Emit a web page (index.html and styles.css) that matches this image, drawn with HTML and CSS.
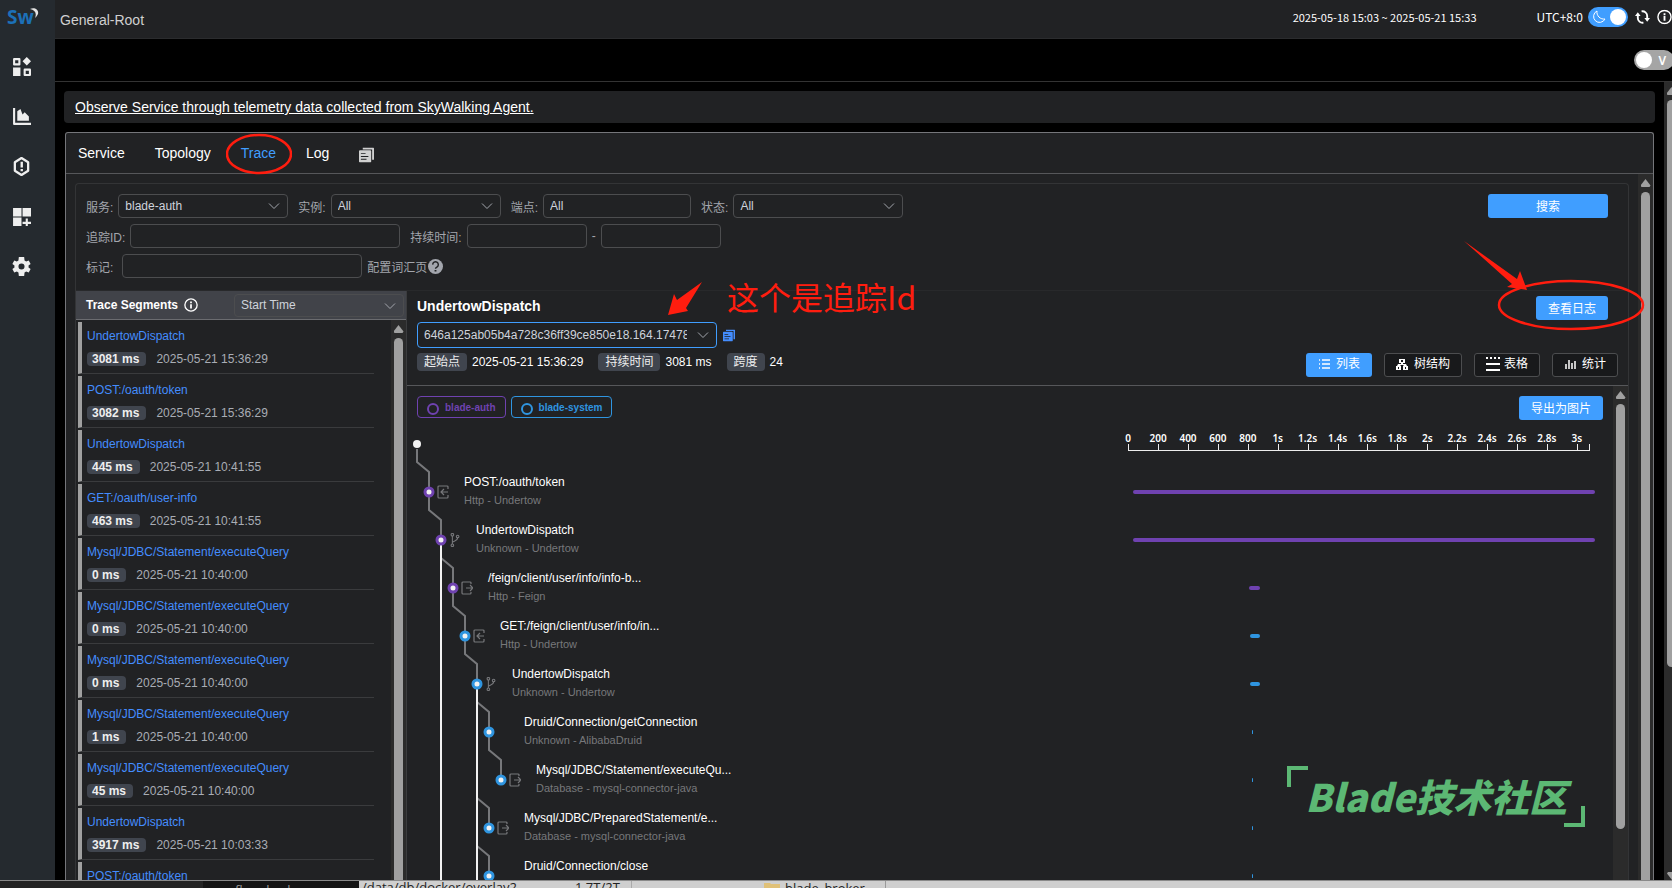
FILE: index.html
```html
<!DOCTYPE html>
<html lang="zh-CN">
<head>
  <meta charset="UTF-8">
  <title>SkyWalking - General-Root</title>
  <link rel="stylesheet" href="styles.css">
</head>
<body>
  <!-- icons -->
  <svg class="sprite" aria-hidden="true">
    <symbol id="i-chevron" viewBox="0 0 12 12"><path d="M1 3.500L6 8.500l5-5" fill="none" stroke="currentColor"/></symbol>
    <symbol id="i-copy" viewBox="0 0 16 16">
      <path d="M4 0h11a1 1 0 0 1 1 1v12h-2V2H4z" fill="currentColor"/>
      <path fill-rule="evenodd" d="M1 3h11a1 1 0 0 1 1 1v11a1 1 0 0 1-1 1H1a1 1 0 0 1-1-1V4a1 1 0 0 1 1-1zm1 3v1h5V6zm0 3v1h8V9zm0 3v1h6v-1z" fill="currentColor"/>
    </symbol>
    <symbol id="i-info" viewBox="0 0 16 16">
      <circle cx="8" cy="8" r="7" fill="none" stroke="currentColor" stroke-width="1.500"/>
      <path d="M7 4h2v2H7zM7 7h2v5H7z" fill="currentColor"/>
    </symbol>
    <symbol id="i-in" viewBox="0 0 12 14">
      <path d="M11 4V2a1 1 0 0 0-1-1H2a1 1 0 0 0-1 1v10a1 1 0 0 0 1 1h8a1 1 0 0 0 1-1v-2M11 7H4M7 4L4 7l3 3" fill="none" stroke="currentColor" stroke-width="1.200"/>
    </symbol>
    <symbol id="i-out" viewBox="0 0 12 14">
      <path d="M10 3V2a1 1 0 0 0-1-1H2a1 1 0 0 0-1 1v10a1 1 0 0 0 1 1h7a1 1 0 0 0 1-1v-1M5 7h6M9 4l3 3-3 3" fill="none" stroke="currentColor" stroke-width="1.200"/>
    </symbol>
    <symbol id="i-fork" viewBox="0 0 12 16">
      <g fill="none" stroke="currentColor" stroke-width="1.200"><circle cx="3" cy="2" r="1.500"/><circle cx="3" cy="14" r="1.500"/><circle cx="9" cy="4" r="1.500"/><path d="M3 3.500v9M9 5.500C9 9 5 9 3 10.500"/></g>
    </symbol>
  </svg>

  <div class="app">
    <nav class="sidebar">
      <a class="logo" href="#">Sw<svg viewBox="0 0 10 11"><path d="M1 1c5-2 9 1 8 5-1 2-2 3-3 4C8 5 6 2 1 1z" fill="#e4e4e4"/></svg></a>
      <a class="nav-item" href="#" aria-label="Dashboards"><svg viewBox="0 0 18 18"><path d="M2 2h5v5H2zM12 12h5v5h-5z" fill="none" stroke="#eee" stroke-width="2" stroke-linejoin="round"/><path d="M1 10h7v8H1zM14 0l4 4-4 4-4-4z" fill="#eee"/></svg></a>
      <a class="nav-item" href="#" aria-label="Metrics"><svg viewBox="0 0 18 18" fill="#eee"><path d="M1 1h2v14h15v2H2a1 1 0 0 1-1-1zM5 13V4l3-2 2 5 2-2 4 4v4z"/></svg></a>
      <a class="nav-item" href="#" aria-label="Alarms"><svg viewBox="0 0 18 20"><path d="M9 1l7 4.500v9L9 19l-7-4.500v-9z" fill="none" stroke="#eee" stroke-width="2.400" stroke-linejoin="round"/><path d="M8 5h2.500v6H8zM8 12.500h2.500V15H8z" fill="#eee"/></svg></a>
      <a class="nav-item" href="#" aria-label="Marketplace"><svg viewBox="0 0 18 18" fill="#eee"><path d="M1 1h8v8H1zM10 1h8v8h-8zM1 10h8v8H1zM13 11h2v3h3v2h-3v3h-2v-3h-3v-2h3z"/></svg></a>
      <a class="nav-item" href="#" aria-label="Settings"><svg viewBox="2 2 20 20" fill="#eee"><path d="M19.400 13a7.500 7.500 0 0 0 0-2l2.200-1.700-2-3.600-2.700 1.100a7 7 0 0 0-1.700-1L14.800 2H9.200l-.4 3.800a7 7 0 0 0-1.700 1L4.400 5.700l-2 3.600L4.600 11a7.500 7.500 0 0 0 0 2l-2.200 1.700 2 3.600 2.700-1.100a7 7 0 0 0 1.700 1l.4 3.800h5.600l.4-3.800a7 7 0 0 0 1.700-1l2.700 1.100 2-3.600zM12 15.200a3.200 3.200 0 1 1 0-6.400 3.200 3.200 0 0 1 0 6.400z"/></svg></a>
    </nav>

    <div class="page">
      <header class="header">
        <span class="path">General-Root</span>
        <span class="range">2025-05-18 15:03 ~ 2025-05-21 15:33</span>
        <span class="utc">UTC+8:0</span>
        <button class="switch dark" aria-label="Dark mode"><svg viewBox="0 0 14 14"><path d="M5 1a6 6 0 1 0 8 8A7 7 0 0 1 5 1z" fill="none" stroke="#fff"/></svg><i></i></button>
        <button class="plain" aria-label="Reload"><svg viewBox="0 0 16 16"><path d="M3 6v3a5 5 0 0 0 6 5M7 2a5 5 0 0 1 6 5v3" fill="none" stroke="#fff" stroke-width="2"/><path d="M0 7l3-4 3 4zM10 9l3 4 3-4z" fill="#fff"/></svg></button>
        <button class="plain" aria-label="About"><svg viewBox="0 0 16 16"><use href="#i-info"/></svg></button>
      </header>
      <div class="toolbar"><button class="switch view"><i></i>V</button></div>

      <div class="body">
        <main class="content">
          <div class="banner"><a href="#">Observe Service through telemetry data collected from SkyWalking Agent.</a></div>

          <section class="card">
            <div class="tabs">
              <a href="#">Service</a>
              <a href="#">Topology</a>
              <a href="#" class="active">Trace</a>
              <a href="#">Log</a>
              <button class="plain" aria-label="Copy"><svg viewBox="0 0 16 16"><use href="#i-copy"/></svg></button>
            </div>

            <div class="card-body">
              <div class="trace">
                <form class="filters">
                  <div class="filter-row">
                    <label for="service">服务:</label>
                    <span class="select"><select id="service"><option>blade-auth</option></select><svg><use href="#i-chevron"/></svg></span>
                    <label for="instance">实例:</label>
                    <span class="select"><select id="instance"><option>All</option></select><svg><use href="#i-chevron"/></svg></span>
                    <label for="endpoint">端点:</label>
                    <input id="endpoint" class="w-endpoint" value="All">
                    <label for="status">状态:</label>
                    <span class="select"><select id="status"><option>All</option></select><svg><use href="#i-chevron"/></svg></span>
                    <button type="button" class="btn search">搜索</button>
                  </div>
                  <div class="filter-row">
                    <label for="traceId">追踪ID:</label>
                    <input id="traceId" class="w-trace">
                    <label for="minTime">持续时间:</label>
                    <input id="minTime" class="w-time">
                    <span class="dash">-</span>
                    <input id="maxTime" class="w-time" aria-label="最大持续时间">
                  </div>
                  <div class="filter-row">
                    <label for="tags" class="tags-label">标记:</label>
                    <input id="tags" class="w-tags">
                    <a class="vocab" href="#">配置词汇页<svg viewBox="0 0 16 16"><circle cx="8" cy="8" r="8" fill="#a3a6ad"/><path d="M5 6a3 3 0 1 1 4.500 2.600C8.300 9.300 8 9.600 8 10.500M7 12.500h2" fill="none" stroke="#212224" stroke-width="1.500"/></svg></a>
                  </div>
                </form>

                <div class="split">
                  <aside class="segments">
                    <div class="segments-head">
                      <strong>Trace Segments</strong>
                      <svg viewBox="0 0 16 16"><use href="#i-info"/></svg>
                      <span class="select sort"><select aria-label="Sort"><option>Start Time</option></select><svg><use href="#i-chevron"/></svg></span>
                    </div>
                    <div class="segments-body">
                      <ul id="segments"></ul>
                      <div class="scroll"><b></b><i></i></div>
                    </div>
                  </aside>

                  <section class="detail">
                    <div class="detail-head">
                      <div class="title-row">
                        <h3>UndertowDispatch</h3>
                        <button class="btn">查看日志</button>
                      </div>
                      <div class="id-row">
                        <span class="select trace-id"><select aria-label="Trace ID"><option>646a125ab05b4a728c36ff39ce850e18.164.17478129</option></select><svg><use href="#i-chevron"/></svg></span>
                        <button class="plain" aria-label="Copy trace id"><svg viewBox="0 0 16 16"><use href="#i-copy"/></svg></button>
                      </div>
                      <div class="meta-row">
                        <span class="tag">起始点</span><span class="val">2025-05-21 15:36:29</span>
                        <span class="tag">持续时间</span><span class="val">3081 ms</span>
                        <span class="tag">跨度</span><span class="val">24</span>
                        <div class="views">
                          <button class="btn"><svg viewBox="0 0 12 12"><path d="M4 2h8M4 6h8M4 10h8M1 2h1M1 6h1M1 10h1" stroke="#fff" stroke-width="1.400"/></svg>列表</button>
                          <button class="btn ghost"><svg viewBox="0 0 12 12" fill="#fff"><path d="M3 1h6v4H7v1h3l1 2h1v4H7V8h1L7 7H5L4 8h1v4H0V8h1l1-2h3V5H3z"/><path d="M5 2h2v2H5zM2 9h1v2H2zM9 9h1v2H9z" fill="#18191b"/></svg>树结构</button>
                          <button class="btn ghost table"><svg viewBox="0 0 14 14"><path d="M0 1h2M4 1h2M8 1h2M12 1h2M0 7h14M0 13h14" stroke="#fff" stroke-width="2"/></svg>表格</button>
                          <button class="btn ghost"><svg viewBox="0 0 12 12"><path d="M2 6v5M5 2v9M8 5v6M11 3v8" stroke="#fff" stroke-width="1.500"/></svg>统计</button>
                        </div>
                      </div>
                    </div>

                    <div class="detail-body">
                      <div class="chart">
                        <div class="legend">
                          <button class="auth"><i></i>blade-auth</button>
                          <button class="system"><i></i>blade-system</button>
                          <button class="btn export">导出为图片</button>
                        </div>
                        <div class="plot">
                          <svg class="links" id="links"></svg>
                          <div class="axis" id="axis"></div>
                          <div class="spans" id="spans"></div>
                        </div>
                      </div>
                      <div class="scroll short"><b></b><i></i></div>
                    </div>
                  </section>
                </div>
              </div>
              <div class="scroll"><b></b><i></i></div>
            </div>
          </section>
        </main>
        <div class="page-scroll"><div class="scroll"><b></b><i></i><b class="down"></b></div></div>
      </div>
    </div>
  </div>

  <!-- window behind the browser -->
  <div class="behind">
    <span class="b-left"></span>
    <span class="b-mid">flow_broker</span>
    <span class="b-path">/data/db/docker/overlay2...</span>
    <span class="b-size">1.7T/2T</span>
    <span class="b-file"><svg viewBox="0 0 16 12"><path d="M0 1h6l1 1h9v10H0z" fill="#e0c178"/></svg>blade_broker</span>
  </div>

  <!-- annotations -->
  <svg class="mark mark-tab" viewBox="0 0 66 42"><ellipse cx="33" cy="21" rx="32" ry="19" fill="none" stroke="#ff1d0f" stroke-width="2.500"/></svg>
  <svg class="mark mark-log" viewBox="0 0 182 92"><ellipse cx="107" cy="64" rx="72" ry="24" fill="none" stroke="#ff1d0f" stroke-width="2.500"/><path d="M0 0L53 38 56 30 63 49 43 46 48 43z" fill="#ff1d0f"/></svg>
  <svg class="mark mark-id" viewBox="0 0 34 33"><path d="M34 0L18 26l2 3L0 33 6 12l3 6z" fill="#ff1d0f"/></svg>
  <div class="mark mark-text">这个是追踪Id</div>
  <div class="mark watermark">Blade技术社区</div>

  <script>
    const segments = [
      ['UndertowDispatch', 3081, '2025-05-21 15:36:29'],
      ['POST:/oauth/token', 3082, '2025-05-21 15:36:29'],
      ['UndertowDispatch', 445, '2025-05-21 10:41:55'],
      ['GET:/oauth/user-info', 463, '2025-05-21 10:41:55'],
      ['Mysql/JDBC/Statement/executeQuery', 0, '2025-05-21 10:40:00'],
      ['Mysql/JDBC/Statement/executeQuery', 0, '2025-05-21 10:40:00'],
      ['Mysql/JDBC/Statement/executeQuery', 0, '2025-05-21 10:40:00'],
      ['Mysql/JDBC/Statement/executeQuery', 1, '2025-05-21 10:40:00'],
      ['Mysql/JDBC/Statement/executeQuery', 45, '2025-05-21 10:40:00'],
      ['UndertowDispatch', 3917, '2025-05-21 10:03:33'],
      ['POST:/oauth/token', 3918, '2025-05-21 10:03:33']
    ];
    document.getElementById('segments').innerHTML = segments.map(s =>
      `<li><a href="#">${s[0]}</a><div><span class="ms">${s[1]} ms</span><time>${s[2]}</time></div></li>`
    ).join('');

    const total = 3081;
    const colors = { auth: '#6f42b0', system: '#2f95e0' };
    // name, layer - component, level, service, icon, start, duration
    const spans = [
      ['POST:/oauth/token', 'Http - Undertow', 1, 'auth', 'in', 0, 3081],
      ['UndertowDispatch', 'Unknown - Undertow', 2, 'auth', 'fork', 0, 3081],
      ['/feign/client/user/info/info-b...', 'Http - Feign', 3, 'auth', 'out', 778, 74],
      ['GET:/feign/client/user/info/in...', 'Http - Undertow', 4, 'system', 'in', 784, 62],
      ['UndertowDispatch', 'Unknown - Undertow', 5, 'system', 'fork', 784, 62],
      ['Druid/Connection/getConnection', 'Unknown - AlibabaDruid', 6, 'system', '', 794, 1],
      ['Mysql/JDBC/Statement/executeQu...', 'Database - mysql-connector-java', 7, 'system', 'out', 794, 1],
      ['Mysql/JDBC/PreparedStatement/e...', 'Database - mysql-connector-java', 6, 'system', 'out', 795, 1],
      ['Druid/Connection/close', 'Unknown - AlibabaDruid', 6, 'system', '', 798, 1]
    ];

    const rowHeight = 48;
    const x = level => 10 + level * 12;
    const y = i => 72 + i * rowHeight;

    document.getElementById('spans').innerHTML = spans.map(s => `
      <div class="span-row">
        <div class="span-name" style="padding-left:${x(s[2]) + 8}px">
          <svg class="kind">${s[4] ? `<use href="#i-${s[4]}"/>` : ''}</svg>
          <div><p>${s[0]}</p><small>${s[1]}</small></div>
        </div>
        <div class="span-time"><i class="${s[3]}" style="margin-left:${s[5] / total * 100}%;width:${s[6] / total * 100}%"></i></div>
      </div>`).join('');

    let g = '';
    spans.forEach((s, i) => {
      const cx = x(s[2]), cy = y(i);
      const direct = i === 0 || spans[i - 1][2] === s[2] - 1 && spans[i - 1][4] !== 'fork';
      const top = direct ? `M${cx - 12} ${cy - 43}V${cy - 30}` : `M${cx - 12} ${cy - 30}`;
      g += `<path d="${top}L${cx} ${cy - 20}V${cy - 5}" fill="none" stroke="#77787b" stroke-width="2"/>`;
    });
    spans.forEach((s, i) => {
      if (s[4] === 'fork') g += `<path d="M${x(s[2])} ${y(i) + 5}V600" stroke="#f2f2f2" stroke-width="2"/>`;
    });
    g += `<circle cx="${x(0)}" cy="24" r="4" fill="#f2f2f2"/>`;
    spans.forEach((s, i) => {
      g += `<circle cx="${x(s[2])}" cy="${y(i)}" r="4" fill="#f2f2f2" stroke="${colors[s[3]]}" stroke-width="3"/>`;
    });
    document.getElementById('links').innerHTML = g;

    let ticks = '';
    for (let t = 0; t <= total; t += 200) {
      const w = Math.min(200, total - t) / total * 100;
      ticks += `<span style="width:${w}%"><em>${t < 1000 ? t : t / 1000 + 's'}</em></span>`;
    }
    document.getElementById('axis').innerHTML = ticks;
  </script>
</body>
</html>
```
FILE: styles.css
```css
* {
  box-sizing: border-box;
}
body {
  margin: 0;
  height: 100vh;
  display: flex;
  flex-direction: column;
  overflow: hidden;
  background: #000;
  color: #fff;
  font-family: "Liberation Sans", "Noto Sans CJK SC", sans-serif;
  font-size: 12px;
}
a {
  color: inherit;
  text-decoration: none;
}
ul, h3, p {
  margin: 0;
  padding: 0;
  list-style: none;
}
button, input, select {
  font: inherit;
  color: inherit;
}
.sprite {
  position: absolute;
  width: 0;
  height: 0;
}
.app {
  flex: 1;
  min-height: 0;
  display: flex;
}
.plain {
  background: none;
  border: none;
  padding: 0;
  display: flex;
  flex: none;
}

/* sidebar */
.sidebar {
  width: 55px;
  flex: none;
  background: #252a2f;
}
.logo {
  display: flex;
  height: 41px;
  padding: 5px 0 0 7px;
  font: 700 19px/24px "Noto Sans", sans-serif;
  color: #1c70b8;
}
.logo svg {
  width: 10px;
  height: 11px;
  margin: 3px 0 0 -5px;
}
.nav-item {
  display: flex;
  align-items: center;
  height: 50px;
  padding-left: 12px;
}
.nav-item svg {
  width: 19px;
  height: 19px;
}

/* header */
.page {
  flex: 1;
  min-width: 0;
  display: flex;
  flex-direction: column;
}
.header {
  height: 39px;
  flex: none;
  display: flex;
  align-items: center;
  padding: 0 0 5px 5px;
  background: #212224;
  border-bottom: 1px solid #2b2c2e;
}
.path {
  flex: 1;
  padding-top: 6px;
  font-size: 14px;
  color: #d0d0d0;
}
.range, .utc {
  font-family: "Noto Sans CJK SC", sans-serif;
}
.range {
  margin-right: 60px;
  font-size: 11px;
}
.utc {
  margin-right: 5px;
}
.switch {
  width: 40px;
  height: 20px;
  flex: none;
  display: flex;
  align-items: center;
  justify-content: space-between;
  border: none;
  border-radius: 10px;
  padding: 0 2px 0 4px;
  background: #409eff;
}
.switch i {
  width: 16px;
  height: 16px;
  border-radius: 50%;
  background: #fff;
}
.switch svg {
  width: 14px;
  height: 14px;
}
.switch.view {
  margin-right: -2px;
  padding: 0 8px 0 2px;
  background: #a5a5a5;
  font: 600 12px "Noto Sans", sans-serif;
}
.header .plain {
  margin-left: 7px;
}
.header .plain svg {
  width: 15px;
  height: 16px;
}
.toolbar {
  height: 43px;
  flex: none;
  display: flex;
  justify-content: flex-end;
  align-items: center;
  border-bottom: 1px solid #333;
}

/* content */
.body {
  flex: 1;
  min-height: 0;
  display: flex;
}
.content {
  flex: 1;
  min-width: 0;
  display: flex;
  flex-direction: column;
  padding: 9px 9px 0;
}
.banner {
  flex: none;
  margin-bottom: 9px;
  padding: 0 11px;
  border-radius: 4px;
  background: #212224;
  font-size: 14px;
  line-height: 32px;
}
.banner a {
  text-decoration: underline;
}
.card {
  flex: 1;
  min-height: 0;
  display: flex;
  flex-direction: column;
  margin: 0 1px;
  background: #212224;
  border: 1px solid #75767a;
  border-bottom: none;
  border-radius: 3px 3px 0 0;
}
.tabs {
  display: flex;
  flex: none;
  align-items: center;
  gap: 30px;
  height: 41px;
  padding-left: 12px;
  border-bottom: 1px solid #56575a;
  font-size: 14px;
}
.tabs .active {
  color: #409eff;
}
.tabs svg {
  width: 15px;
  height: 16px;
  margin-top: 3px;
  color: #d0d0d0;
}
.card-body {
  flex: 1;
  min-height: 0;
  display: flex;
}
.trace {
  flex: 1;
  min-width: 0;
  display: flex;
  flex-direction: column;
  margin: 9px 9px 0;
  border: 1px solid #333436;
  border-bottom: none;
  border-radius: 4px 4px 0 0;
}

/* scrollbars */
.scroll {
  width: 15px;
  flex: none;
  display: flex;
  flex-direction: column;
  align-items: center;
  background: #2b2b2b;
}
.scroll b {
  width: 10px;
  height: 8px;
  flex: none;
  margin: 5px 0;
  background: #a0a0a0;
  clip-path: polygon(50% 0, 100% 80%, 90% 100%, 10% 100%, 0 80%);
}
.scroll .down {
  transform: rotate(180deg);
}
.scroll i {
  width: 9px;
  flex: 1;
  background: #a0a0a0;
  border-radius: 5px 5px 0 0;
}
.scroll.short i {
  flex: 0 0 86%;
  border-radius: 5px;
}
.page-scroll {
  width: 8px;
  flex: none;
  display: flex;
  overflow: hidden;
}
.page-scroll i {
  flex: 0 0 71%;
  border-radius: 5px;
}
.page-scroll .down {
  margin-top: auto;
  margin-bottom: 0;
}

/* filters */
.filters {
  flex: none;
  display: flex;
  flex-direction: column;
  gap: 6px;
  padding: 10px 20px 12px 10px;
  border-bottom: 1px solid #28292b;
}
.filter-row {
  display: flex;
  align-items: center;
  height: 24px;
  color: #a3a6ad;
}
.filter-row label {
  margin-right: 5px;
}
.filter-row input, .select select {
  height: 24px;
  padding: 0 6px;
  background: transparent;
  border: 1px solid #4c4d4f;
  border-radius: 4px;
  color: #cfd3dc;
  outline: none;
}
.filter-row > input, .filter-row > .select {
  margin-right: 10px;
}
.select {
  position: relative;
  display: block;
  width: 170px;
}
.select select {
  display: block;
  width: 100%;
  appearance: none;
}
.select option {
  background: #212224;
}
.select svg {
  position: absolute;
  right: 8px;
  top: 6px;
  width: 12px;
  height: 12px;
  color: #a3a6ad;
  pointer-events: none;
}
.w-endpoint {
  width: 148px;
}
.w-trace {
  width: 270px;
}
.filter-row .w-time {
  width: 120px;
  margin-right: 5px;
}
.dash {
  margin-right: 5px;
}
.w-tags {
  width: 240px;
}
.filter-row .tags-label {
  margin-right: 9px;
}
.filter-row > .w-tags {
  margin-right: 5px;
}
.vocab {
  display: flex;
  align-items: center;
}
.vocab svg {
  width: 15px;
  height: 15px;
  margin-left: 1px;
}
.btn {
  height: 24px;
  padding: 0 12px 2px;
  border: none;
  border-radius: 3px;
  background: #409eff;
  color: #fff;
}
.search {
  width: 120px;
  margin-left: auto;
}

/* segment list */
.split {
  flex: 1;
  min-height: 0;
  display: flex;
}
.segments {
  width: 331px;
  flex: none;
  display: flex;
  flex-direction: column;
  border-right: 1px solid #3b3c3e;
}
.segments-head {
  height: 29px;
  flex: none;
  display: flex;
  align-items: center;
  padding: 0 2px 0 10px;
  background: #414349;
  border-bottom: 1px solid #6b6c70;
}
.segments-head > svg {
  width: 14px;
  height: 14px;
  margin-left: 6px;
}
.sort {
  margin-left: auto;
}
.sort select {
  height: 23px;
}
.segments-body {
  flex: 1;
  min-height: 0;
  display: flex;
  justify-content: space-between;
}
.segments ul {
  flex: 1;
  overflow: hidden;
  padding: 2px 17px 0 2px;
}
.segments li {
  height: 52px;
  margin-bottom: 2px;
  padding: 7px 0 0 5px;
  border-left: 4px solid #a0a0a0;
  border-bottom: 1px solid #3a3b3d;
}
.segments li a {
  display: block;
  line-height: 15px;
  margin-bottom: 8px;
  color: #448dfe;
}
.segments li div {
  display: flex;
  line-height: 14px;
}
.ms {
  margin-right: 10px;
  padding: 0 7px 0 5px;
  background: #40454e;
  border-radius: 4px;
  font-weight: bold;
  color: #eee;
}
.segments time {
  color: #a9adb5;
}

/* trace detail */
.detail {
  flex: 1;
  min-width: 0;
  display: flex;
  flex-direction: column;
}
.detail-head {
  flex: none;
  padding: 0 10px 8px;
  border-bottom: 1px solid #56575a;
}
.title-row {
  display: flex;
  justify-content: space-between;
  height: 31px;
  padding: 5px 10px 0 0;
}
.title-row h3 {
  font-size: 14px;
  line-height: 21px;
}
.id-row {
  display: flex;
  align-items: center;
  gap: 6px;
  margin-bottom: 5px;
}
.trace-id {
  width: 300px;
}
.trace-id select {
  height: 26px;
  padding-right: 29px;
  border-color: #409eff;
}
.trace-id svg {
  top: 7px;
}
.id-row .plain svg {
  width: 12px;
  height: 13px;
  color: #448dfe;
}
.meta-row {
  display: flex;
  align-items: flex-start;
  line-height: 18px;
}
.tag {
  margin-right: 5px;
  padding: 0 7px;
  background: #40454e;
  border-radius: 4px;
  color: #eee;
}
.val {
  margin-right: 15px;
}
.views {
  display: flex;
  gap: 12px;
  margin-left: auto;
}
.views .btn {
  display: flex;
  align-items: center;
  gap: 6px;
}
.views svg {
  width: 12px;
  height: 12px;
}
.views .table svg {
  width: 14px;
  height: 14px;
}
.views .ghost {
  padding: 0 11px 2px;
  background: #18191b;
  border: 1px solid #4c4d4f;
}
.views .table {
  gap: 4px;
}
.detail-body {
  flex: 1;
  min-height: 0;
  display: flex;
}
.chart {
  flex: 1;
  min-width: 0;
  overflow: hidden;
}
.legend {
  display: flex;
  align-items: flex-start;
  gap: 5px;
  height: 34px;
  padding: 10px 10px 0;
}
.legend button:not(.btn) {
  display: flex;
  align-items: center;
  gap: 6px;
  height: 22px;
  padding: 0 9px;
  background: none;
  border: 1px solid;
  border-radius: 4px;
  font-size: 10px;
  font-weight: bold;
}
.legend i {
  width: 12px;
  height: 12px;
  margin-top: 4px;
  border: 2px solid;
  border-radius: 50%;
}
.legend .auth {
  color: #6f42b0;
}
.legend .system {
  color: #2f95e0;
}
.export {
  margin-left: auto;
}
.plot {
  position: relative;
  padding-top: 11px;
}
.links {
  position: absolute;
  left: 0;
  top: 0;
  width: 100%;
  height: 600px;
}
.axis {
  display: flex;
  height: 20px;
  margin: 0 23px 17px 59.8%;
  border-bottom: 1px solid #eee;
  border-right: 1px solid #eee;
  border-image: linear-gradient(to top, #eee 7px, transparent 7px) 1;
}
.axis span {
  position: relative;
  flex: none;
}
.axis span::before {
  content: "";
  position: absolute;
  left: 0;
  bottom: 0;
  width: 1px;
  height: 6px;
  background: #eee;
}
.axis em {
  display: block;
  width: 30px;
  margin-left: -15px;
  text-align: center;
  font: 600 10px/14px "Noto Sans", sans-serif;
}
.span-row {
  display: grid;
  grid-template-columns: 60fr 40fr;
  align-items: center;
  height: 48px;
}
.span-name {
  display: flex;
  align-items: center;
  gap: 15px;
}
.kind {
  width: 12px;
  height: 14px;
  flex: none;
  color: #77787b;
}
.span-name p, .span-name small {
  display: block;
  line-height: 18px;
}
.span-name div {
  padding-bottom: 2px;
}
.span-name small {
  font-size: 11px;
  color: #77787b;
}
.span-time {
  padding: 0 18px 0 2px;
}
.span-time i {
  display: block;
  min-width: 1px;
  height: 4px;
  border-radius: 2px;
}
.span-time .auth {
  background: #6f42b0;
}
.span-time .system {
  background: #2f95e0;
}

/* strip under the browser */
.behind {
  height: 8px;
  flex: none;
  display: flex;
  overflow: hidden;
  background: #cfcfcf;
  border-top: 1px solid #8a8a8a;
  color: #222;
  font: 13px/12px "Open Sans", sans-serif;
}
.behind span {
  flex: none;
}
.b-left {
  width: 203px;
  background: #242424;
}
.b-mid {
  width: 156px;
  padding: 3px 0 0 32px;
  background: #151515;
  color: #999;
}
.b-path {
  width: 213px;
  padding-left: 3px;
}
.b-size {
  width: 60px;
  padding-left: 3px;
  border-right: 1px solid #aaa;
}
.b-file {
  display: flex;
  gap: 5px;
  width: 254px;
  padding: 1px 0 0 132px;
  border-right: 1px solid #999;
}
.b-file svg {
  width: 16px;
  height: 12px;
}

/* annotations */
.mark {
  position: absolute;
  pointer-events: none;
}
.mark-tab {
  left: 226px;
  top: 133px;
  width: 66px;
  height: 42px;
}
.mark-log {
  right: 26px;
  top: 241px;
  width: 182px;
  height: 92px;
}
.mark-id {
  left: 668px;
  top: 282px;
  width: 34px;
  height: 33px;
}
.mark-text {
  left: 727px;
  top: 273px;
  color: #ff1d0f;
  font: 400 32px/46px "Noto Sans CJK SC", sans-serif;
}
.watermark {
  right: 87px;
  bottom: 61px;
  padding: 5px 18px 7px;
  color: #5cb874;
  font: italic 900 38px/49px "Noto Sans CJK SC", sans-serif;
}
.watermark::before, .watermark::after {
  content: "";
  position: absolute;
  width: 17px;
  height: 17px;
  border: 0 solid #5cb874;
}
.watermark::before {
  left: 0;
  top: 0;
  border-width: 4px 0 0 4px;
}
.watermark::after {
  right: 0;
  bottom: 0;
  border-width: 0 4px 4px 0;
}
```
